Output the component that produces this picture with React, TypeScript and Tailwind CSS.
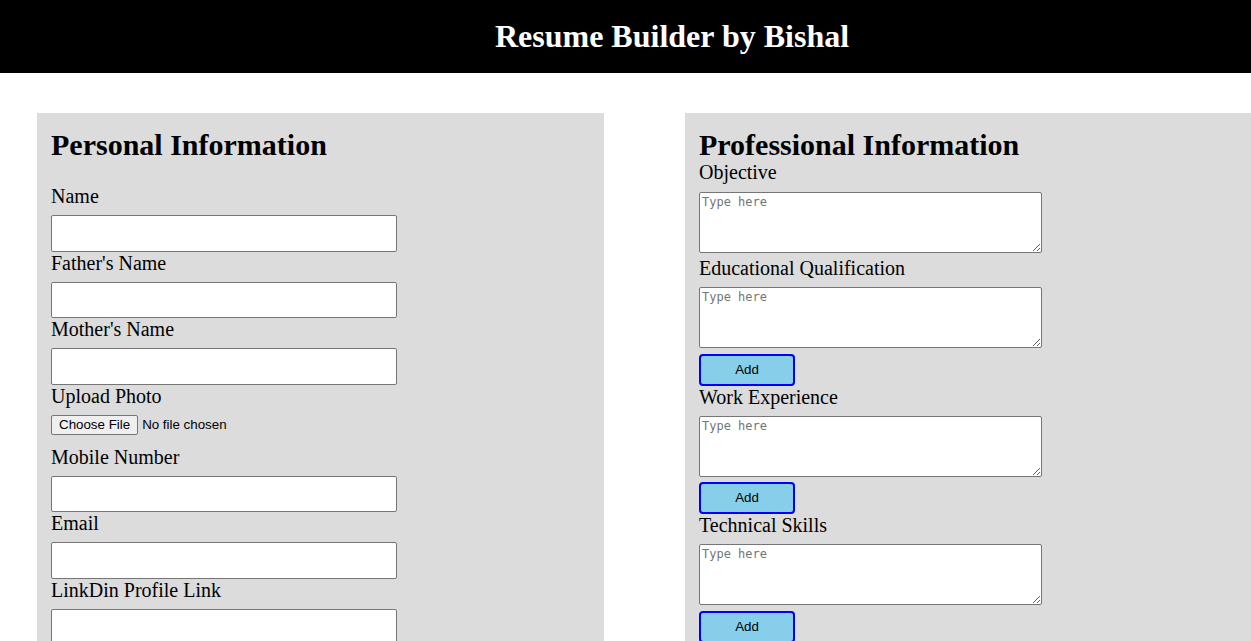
import React from 'react'

const serif = "font-['Liberation_Serif','Times_New_Roman',serif]"

function Field({ label, type = 'text' }: { label: string; type?: string }) {
  return (
    <div>
      <label className="block text-[20px] leading-[23px]">{label}</label>
      <input
        type={type}
        className="block mt-[7px] h-[36.5px] w-[346px] bg-white border border-[#767676] rounded-[2px] px-[2px] text-[13.333px] font-['Liberation_Sans',Arial,sans-serif]"
      />
    </div>
  )
}

function AreaField({ label, withButton = true, first = false }: { label: string; withButton?: boolean; first?: boolean }) {
  return (
    <div>
      <label className="block text-[20px] leading-[23px]">{label}</label>
      <textarea
        placeholder="Type here"
        className={`block ${first ? 'mt-[8px]' : 'mt-[7px]'} h-[61px] w-[343px] bg-white border border-[#767676] rounded-[2px] px-[2px] py-[2px] text-[12px] leading-[15px] font-['DejaVu_Sans_Mono','Liberation_Mono',monospace] placeholder:text-[#757575] resize`}
      />
      {withButton ? (
        <button
          type="button"
          className="block mt-[5.5px] h-[32px] w-[96px] bg-[#87ceeb] border-2 border-[#0000ff] rounded-[4px] text-[13.333px] text-black font-['Liberation_Sans',Arial,sans-serif]"
        >
          Add
        </button>
      ) : (
        <div className="h-[4px]" />
      )}
    </div>
  )
}

export default function App() {
  return (
    <div className={`${serif} text-black bg-white min-h-[641px] overflow-hidden`}>
      <header className="h-[73px] bg-black flex items-center justify-center pl-[93px]">
        <h1 className="text-[32px] leading-[37px] font-bold text-white">Resume Builder by Bishal</h1>
      </header>

      <main className="flex gap-[81px] pl-[37px] mt-[40px]">
        {/* left column */}
        <section className="w-[567px] shrink-0 bg-[#dcdcdc] px-[14px] pt-[15px] pb-[20px]">
          <h2 className="text-[30px] leading-[33px] font-bold mb-[24px]">Personal Information</h2>
          <Field label="Name" />
          <Field label="Father's Name" />
          <Field label="Mother's Name" />
          <div>
            <label className="block text-[20px] leading-[23px]">Upload Photo</label>
            <input
              type="file"
              className="block mt-[6.5px] mb-[10.5px] h-[21px] text-[13.333px] leading-[21px] font-['Liberation_Sans',Arial,sans-serif] file:mr-[4px] file:px-[7px] file:py-[2px] file:h-[20px] file:border file:border-[#767676] file:rounded-[2px] file:bg-[#efefef] file:text-black file:text-[13.333px] file:leading-[14px]"
            />
          </div>
          <Field label="Mobile Number" />
          <Field label="Email" />
          <Field label="LinkDin Profile Link" />
        </section>

        {/* right column */}
        <section className="flex-1 min-w-0 bg-[#dcdcdc] px-[14px] pt-[15px] pb-[20px]">
          <h2 className="text-[30px] leading-[33px] font-bold">Professional Information</h2>
          <AreaField label="Objective" withButton={false} first />
          <AreaField label="Educational Qualification" />
          <AreaField label="Work Experience" />
          <AreaField label="Technical Skills" />
        </section>
      </main>
    </div>
  )
}
